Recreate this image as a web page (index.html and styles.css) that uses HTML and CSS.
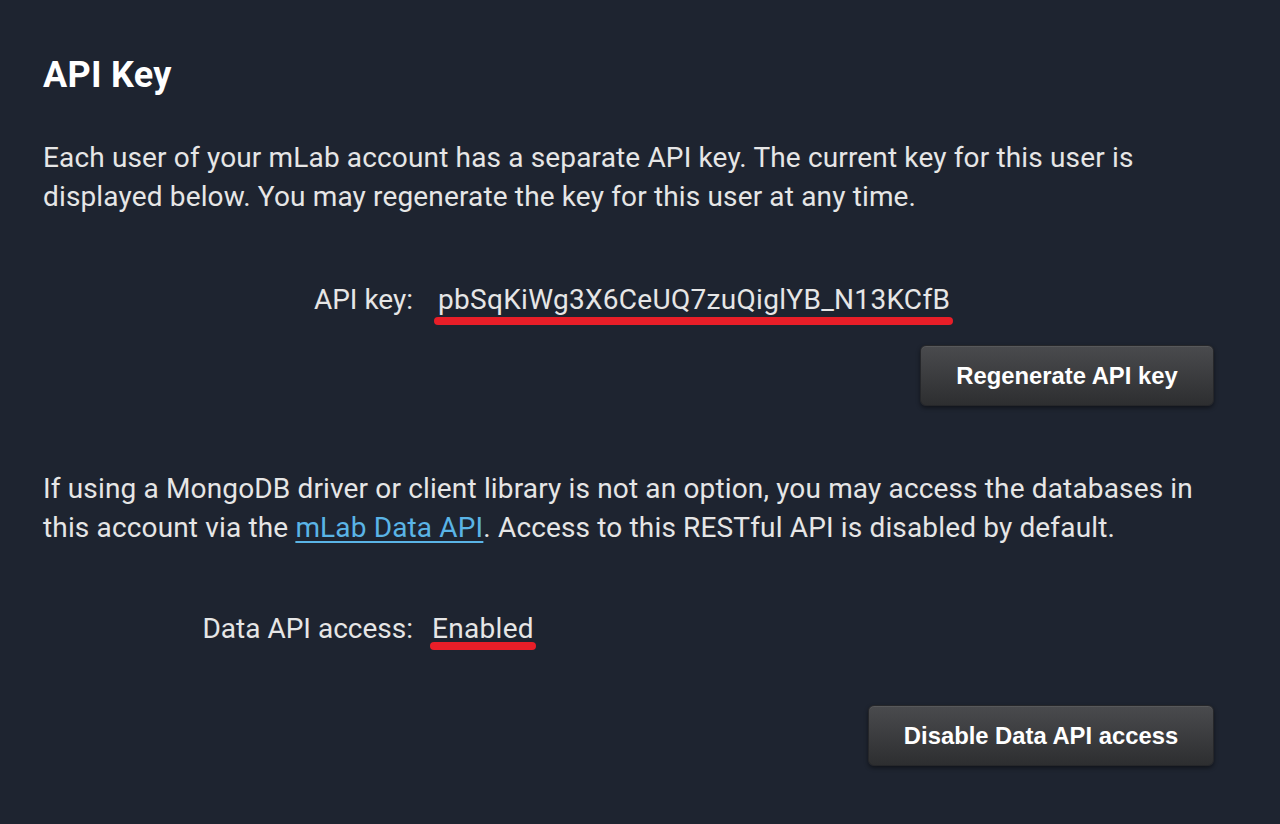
FILE: index.html
```html
<!DOCTYPE html>
<html lang="en">
<head>
<meta charset="utf-8">
<title>API Key</title>
<link rel="stylesheet" href="styles.css">
</head>
<body>
<main class="panel">
  <h1 class="title">API Key</h1>
  <p class="text">Each user of your mLab account has a separate API key. The current key for this user is displayed below. You may regenerate the key for this user at any time.</p>
  <div class="row row-key">
    <span class="label">API key:</span>
    <span class="value value-key marked">pbSqKiWg3X6CeUQ7zuQiglYB_N13KCfB</span>
  </div>
  <div class="actions actions-key">
    <button class="btn btn-regen" type="button">Regenerate API key</button>
  </div>
  <p class="text text-second">If using a MongoDB driver or client library is not an option, you may access the databases in this account via the <a class="link" href="#">mLab Data API</a>. Access to this RESTful API is disabled by default.</p>
  <div class="row row-access">
    <span class="label">Data API access:</span>
    <span class="value marked marked-short">Enabled</span>
  </div>
  <div class="actions actions-access">
    <button class="btn btn-disable" type="button">Disable Data API access</button>
  </div>
</main>
</body>
</html>
```
FILE: styles.css
```css
html, body {
  margin: 0;
  padding: 0;
  background: #1e2430;
}
body {
  width: 1280px;
  height: 824px;
  overflow: hidden;
  font-family: Roboto, "Liberation Sans", Arial, sans-serif;
  color: #e6e6e6;
}
.panel {
  padding: 53px 66px 0 43px;
}
.title {
  margin: 0;
  font-family: Roboto, "Liberation Sans", sans-serif;
  font-weight: 700;
  font-size: 36px;
  line-height: 44px;
  letter-spacing: 0.3px;
  color: #ffffff;
}
.text {
  margin: 41px 0 0 0;
  font-size: 28px;
  line-height: 39px;
  letter-spacing: 0.15px;
  word-spacing: 0;
}
.text-second {
  margin-top: 63px;
}
.row {
  display: flex;
  align-items: baseline;
  font-size: 28px;
  line-height: 39px;
  letter-spacing: 0.3px;
}
.row-key {
  margin-top: 64px;
}
.row-access {
  margin-top: 62px;
}
.label {
  width: 370px;
  text-align: right;
  padding-right: 19px;
  box-sizing: content-box;
  letter-spacing: 0;
}
.value {
  padding: 0;
}
.value-key {
  margin-left: 6px;
}
.marked {
  position: relative;
}
.marked::after {
  content: "";
  position: absolute;
  left: -4px;
  right: -3px;
  bottom: -6px;
  height: 8px;
  border-radius: 4px;
  background: #e81e28;
}
.marked-short::after {
  left: -2px;
  right: -2px;
  bottom: -2px;
}
.link {
  color: #5ab4e6;
  text-decoration: underline;
  text-underline-offset: 4px;
}
.actions {
  display: flex;
  justify-content: flex-end;
}
.actions-key {
  margin-top: 26px;
}
.actions-access {
  margin-top: 57px;
}
.btn {
  font-family: "Liberation Sans", Arial, sans-serif;
  font-weight: 700;
  font-size: 23.8px;
  color: #ffffff;
  height: 61px;
  border-radius: 6px;
  border: 1px solid #26272a;
  background: linear-gradient(#4a4b4e, #2d2e30);
  box-shadow: 0 2px 4px rgba(0, 0, 0, 0.45), inset 0 1px 0 rgba(255, 255, 255, 0.08);
  cursor: pointer;
}
.btn-regen {
  width: 294px;
}
.btn-disable {
  width: 346px;
}
```
